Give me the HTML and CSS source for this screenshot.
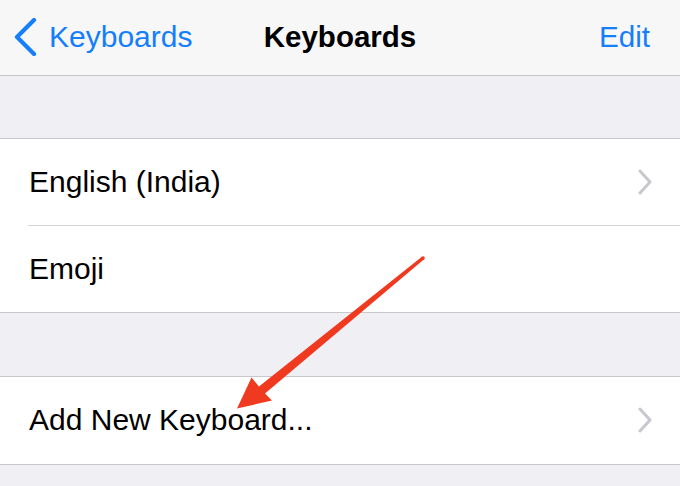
FILE: index.html
```html
<!DOCTYPE html>
<html>
<head>
<meta charset="utf-8">
<link rel="stylesheet" href="styles.css">
</head>
<body>
<div class="screen">
  <header class="nav">
    <div class="nav-back">
      <svg class="back-chevron" width="24" height="38" viewBox="0 0 24 38"><polyline points="21,2 4,19 21,36" fill="none" stroke="#147efb" stroke-width="4.2" stroke-linecap="round" stroke-linejoin="round"/></svg>
      <span class="nav-link">Keyboards</span>
    </div>
    <div class="nav-title">Keyboards</div>
    <div class="nav-edit nav-link">Edit</div>
  </header>

  <div class="band band-top"></div>

  <section class="group">
    <div class="row row-first">
      <span class="row-label">English (India)</span>
      <svg class="disclosure" width="18" height="26" viewBox="0 0 18 26"><polyline points="4,2 14,13 4,24" fill="none" stroke="#c7c7cc" stroke-width="3" stroke-linecap="round" stroke-linejoin="round"/></svg>
    </div>
    <div class="separator"></div>
    <div class="row row-second">
      <span class="row-label">Emoji</span>
    </div>
  </section>

  <div class="band band-mid"></div>

  <section class="group">
    <div class="row row-add">
      <span class="row-label">Add New Keyboard...</span>
      <svg class="disclosure" width="18" height="26" viewBox="0 0 18 26"><polyline points="4,2 14,13 4,24" fill="none" stroke="#c7c7cc" stroke-width="3" stroke-linecap="round" stroke-linejoin="round"/></svg>
    </div>
  </section>

  <svg class="annotation" width="680" height="486" viewBox="0 0 680 486">
    <polygon fill="#f03a20" points="421.9,256.7 424.1,259.3 265,393.5 272,400.5 237,408.5 251.5,377.5 259,386.5"/>
    <circle cx="423" cy="258" r="1.8" fill="#f03a20"/>
  </svg>
</div>
</body>
</html>
```

FILE: styles.css
```css
* {
  box-sizing: border-box;
}

html, body {
  margin: 0;
  padding: 0;
}

body {
  width: 680px;
  height: 486px;
  overflow: hidden;
  background: #efeff4;
  font-family: "Liberation Sans", Arial, sans-serif;
  color: #000;
}

.screen {
  position: relative;
  width: 680px;
  height: 486px;
}

.nav {
  height: 76px;
  background: #f7f7f8;
  border-bottom: 1px solid #c4c4c8;
  display: grid;
  grid-template-columns: 1fr auto 1fr;
  align-items: center;
  padding-bottom: 2px;
}

.nav-back {
  display: flex;
  align-items: center;
  padding-left: 13px;
  gap: 12px;
}

.back-chevron {
  display: block;
  margin-top: 1px;
}

.nav-link {
  color: #147efb;
  font-size: 30px;
}

.nav-title {
  font-size: 29.5px;
  font-weight: bold;
}

.nav-edit {
  justify-self: end;
  padding-right: 30px;
  font-size: 29.6px;
}

.band-top {
  height: 62px;
}

.band-mid {
  height: 63px;
}

.group {
  background: #fff;
  border-top: 1px solid #c8c7cc;
  border-bottom: 1px solid #c8c7cc;
}

.row {
  display: flex;
  align-items: center;
  justify-content: space-between;
  padding: 0 26px 1px 29px;
  height: 86px;
}

.row-add {
  height: 87px;
}

.row-label {
  font-size: 30px;
}

.separator {
  height: 1px;
  margin-left: 28px;
  background: #d3d3d8;
}

.disclosure {
  display: block;
}

.annotation {
  position: absolute;
  left: 0;
  top: 0;
  pointer-events: none;
}
```
